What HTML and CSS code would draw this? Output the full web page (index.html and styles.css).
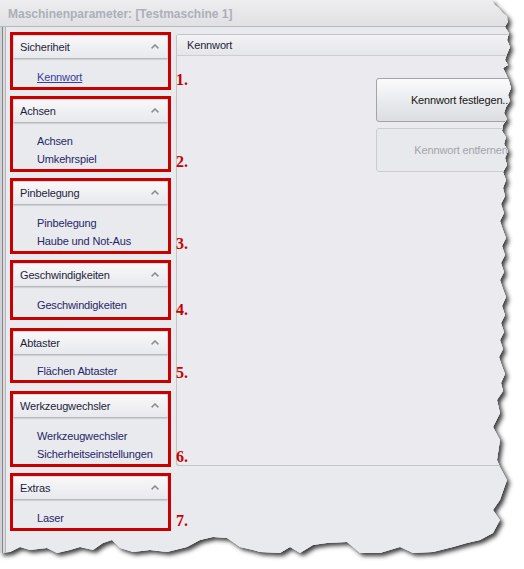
FILE: index.html
```html
<!DOCTYPE html>
<html lang="de">
<head>
  <meta charset="UTF-8">
  <title>Maschinenparameter</title>
  <link rel="stylesheet" href="styles.css">
</head>
<body>
  <!-- torn paper edge: shape + drop shadow -->
  <svg class="tear-shadow" width="524" height="569">
    <defs>
      <polygon id="tear" points="0,0 492,0 495,5 499,8 503,13 507,16 508,22 505,27 509,33 507,40 510,47 507,54 505,60 508,65 503,68 506,74 509,81 511,88 508,95 510,101 506,107 504,113 507,119 503,125 502,131 506,137 504,144 508,151 505,158 507,165 503,172 506,180 503,188 505,196 501,204 504,213 500,221 503,230 506,238 502,246 505,255 501,263 504,272 500,280 503,289 506,297 502,306 505,315 501,323 504,332 500,340 503,349 499,357 502,366 505,374 501,383 503,391 497,400 500,413 493,427 500,440 497,460 500,467 507,480 500,500 493,510 500,520 493,533 480,540 467,543 453,547 433,552 413,553 400,547 380,553 360,553 347,542 327,543 313,545 300,553 290,547 280,553 260,552 253,550 240,547 227,538 213,537 200,540 187,547 167,552 150,550 133,552 120,548 112,540 103,543 93,550 80,547 70,550 57,553 47,548 30,550 20,547 10,552 0,553"/>
      <clipPath id="tearClip"><use href="#tear"/></clipPath>
      <filter id="blur" x="-5%" y="-5%" width="110%" height="110%">
        <feGaussianBlur stdDeviation="2"/>
      </filter>
    </defs>
    <use href="#tear" transform="translate(3 3)" fill="#3c3c3c" filter="url(#blur)"/>
  </svg>

  <div class="window">
    <div class="titlebar">Maschinenparameter: [Testmaschine 1]</div>
    <div class="frame">
      <div class="client">

        <div class="nav">
          <div class="group">
            <div class="group-head"><span>Sicheriheit</span><svg class="chev" width="8" height="5" viewBox="0 0 8 5"><path d="M0.6 4.4 L4 1 L7.4 4.4"/></svg></div>
            <div class="items"><a class="item link">Kennwort</a></div>
            <span class="mark">1.</span>
          </div>
          <div class="group">
            <div class="group-head"><span>Achsen</span><svg class="chev" width="8" height="5" viewBox="0 0 8 5"><path d="M0.6 4.4 L4 1 L7.4 4.4"/></svg></div>
            <div class="items"><span class="item">Achsen</span><span class="item">Umkehrspiel</span></div>
            <span class="mark">2.</span>
          </div>
          <div class="group">
            <div class="group-head"><span>Pinbelegung</span><svg class="chev" width="8" height="5" viewBox="0 0 8 5"><path d="M0.6 4.4 L4 1 L7.4 4.4"/></svg></div>
            <div class="items"><span class="item">Pinbelegung</span><span class="item">Haube und Not-Aus</span></div>
            <span class="mark">3.</span>
          </div>
          <div class="group">
            <div class="group-head"><span>Geschwindigkeiten</span><svg class="chev" width="8" height="5" viewBox="0 0 8 5"><path d="M0.6 4.4 L4 1 L7.4 4.4"/></svg></div>
            <div class="items"><span class="item">Geschwindigkeiten</span></div>
            <span class="mark">4.</span>
          </div>
          <div class="group">
            <div class="group-head"><span>Abtaster</span><svg class="chev" width="8" height="5" viewBox="0 0 8 5"><path d="M0.6 4.4 L4 1 L7.4 4.4"/></svg></div>
            <div class="items"><span class="item">Flächen Abtaster</span></div>
            <span class="mark">5.</span>
          </div>
          <div class="group">
            <div class="group-head"><span>Werkzeugwechsler</span><svg class="chev" width="8" height="5" viewBox="0 0 8 5"><path d="M0.6 4.4 L4 1 L7.4 4.4"/></svg></div>
            <div class="items"><span class="item">Werkzeugwechsler</span><span class="item">Sicherheitseinstellungen</span></div>
            <span class="mark">6.</span>
          </div>
          <div class="group">
            <div class="group-head"><span>Extras</span><svg class="chev" width="8" height="5" viewBox="0 0 8 5"><path d="M0.6 4.4 L4 1 L7.4 4.4"/></svg></div>
            <div class="items"><span class="item">Laser</span></div>
            <span class="mark">7.</span>
          </div>
        </div>

        <div class="panel">
          <div class="panel-head">Kennwort</div>
          <div class="panel-body">
            <button class="btn">Kennwort festlegen...</button>
            <button class="btn" disabled>Kennwort entfernen</button>
          </div>
        </div>

      </div>
    </div>
  </div>
</body>
</html>
```

FILE: styles.css
```css
body {
  margin: 0;
  background: #fff;
  font-family: "Liberation Sans", Arial, sans-serif;
  font-size: 11px;
  letter-spacing: -0.15px;
}
.tear-shadow {
  position: absolute;
  left: 0;
  top: 0;
}
.window {
  position: relative;
  z-index: 1;
  width: 524px;
  height: 569px;
  overflow: hidden;
  clip-path: url(#tearClip);
  background: #d6d6da;
  display: flex;
  flex-direction: column;
}
.titlebar {
  height: 25px;
  padding: 1px 0 0 8px;
  line-height: 26px;
  border-bottom: 1px solid #b7b8be;
  background: linear-gradient(#eeeef0, #e1e1e4);
  font-weight: bold;
  font-size: 12px;
  letter-spacing: 0;
  color: #adafb8;
}
.frame {
  flex: 1;
  display: flex;
  background: linear-gradient(to right, #d2d2d6 0 2px, #85858c 2px 3px, #dadade 3px 5px);
}
.client {
  flex: 1;
  display: flex;
  margin-left: 5px;
  border-left: 1px solid #b3b4ba;
  background: #e9eaee;
}
.nav {
  width: 170px;
  flex-shrink: 0;
  padding: 5px 0 0 4px;
  box-sizing: border-box;
}
.group {
  position: relative;
  width: 161px;
  box-sizing: border-box;
  border: 3px solid #c80000;
  margin-bottom: 6px;
}
/* the red frames are hand-drawn annotations, not evenly spaced */
.group:nth-child(4) {
  margin-bottom: 8px;
}
.group:nth-child(4) .items {
  padding-bottom: 3px;
}
.group:nth-child(5) {
  margin-bottom: 8px;
}
.group:nth-child(5) .items {
  padding-top: 7px;
  padding-bottom: 0;
}
.group-head {
  height: 24px;
  box-sizing: border-box;
  display: flex;
  align-items: center;
  justify-content: space-between;
  padding: 0 8px 0 6px;
  border: 1px solid #d6d7dc;
  border-bottom-color: #b8b9bf;
  background: linear-gradient(#f8f8fa, #e8e9ed);
  box-shadow: 0 1px 1px rgba(0, 0, 0, 0.1);
  color: #1e1e3a;
}
.chev {
  margin-bottom: 2px;
}
.chev path {
  fill: none;
  stroke: #8c8c90;
  stroke-width: 1.5;
}
.items {
  display: flex;
  flex-direction: column;
  padding: 9px 0 1px 24px;
  line-height: 18px;
}
.item {
  color: #262668;
}
.item.link {
  color: #3b3b9c;
  text-decoration: underline;
}
.mark {
  position: absolute;
  left: calc(100% + 8px);
  bottom: -1px;
  font-family: "Liberation Serif", "Times New Roman", serif;
  font-weight: bold;
  font-size: 16px;
  line-height: 16px;
  letter-spacing: 0;
  color: #c80000;
}
.panel {
  flex: 1;
  margin-top: 7px;
  height: 432px;
  box-sizing: border-box;
  border: 1px solid #c3c4c9;
  border-right: none;
  border-radius: 3px 0 0 3px;
  background: #ebebef;
}
.panel-head {
  height: 20px;
  line-height: 20px;
  padding-left: 10px;
  border-bottom: 1px solid #cdced3;
  background: linear-gradient(#f3f3f5, #e5e6e9);
  color: #1e1e3a;
}
.panel-body {
  padding: 22px 0 0 199px;
}
.btn {
  display: block;
  width: 170px;
  height: 44px;
  margin-bottom: 6px;
  border: 1px solid #a2a3ab;
  border-radius: 3px;
  background: linear-gradient(#fbfbfc, #e9eaed 55%, #dcdde1);
  font-family: inherit;
  font-size: 11px;
  letter-spacing: -0.15px;
  color: #151515;
  cursor: pointer;
}
.btn:disabled {
  border-color: #cbccd1;
  background: #e8e9ec;
  color: #a3a4ad;
  cursor: default;
}
```
